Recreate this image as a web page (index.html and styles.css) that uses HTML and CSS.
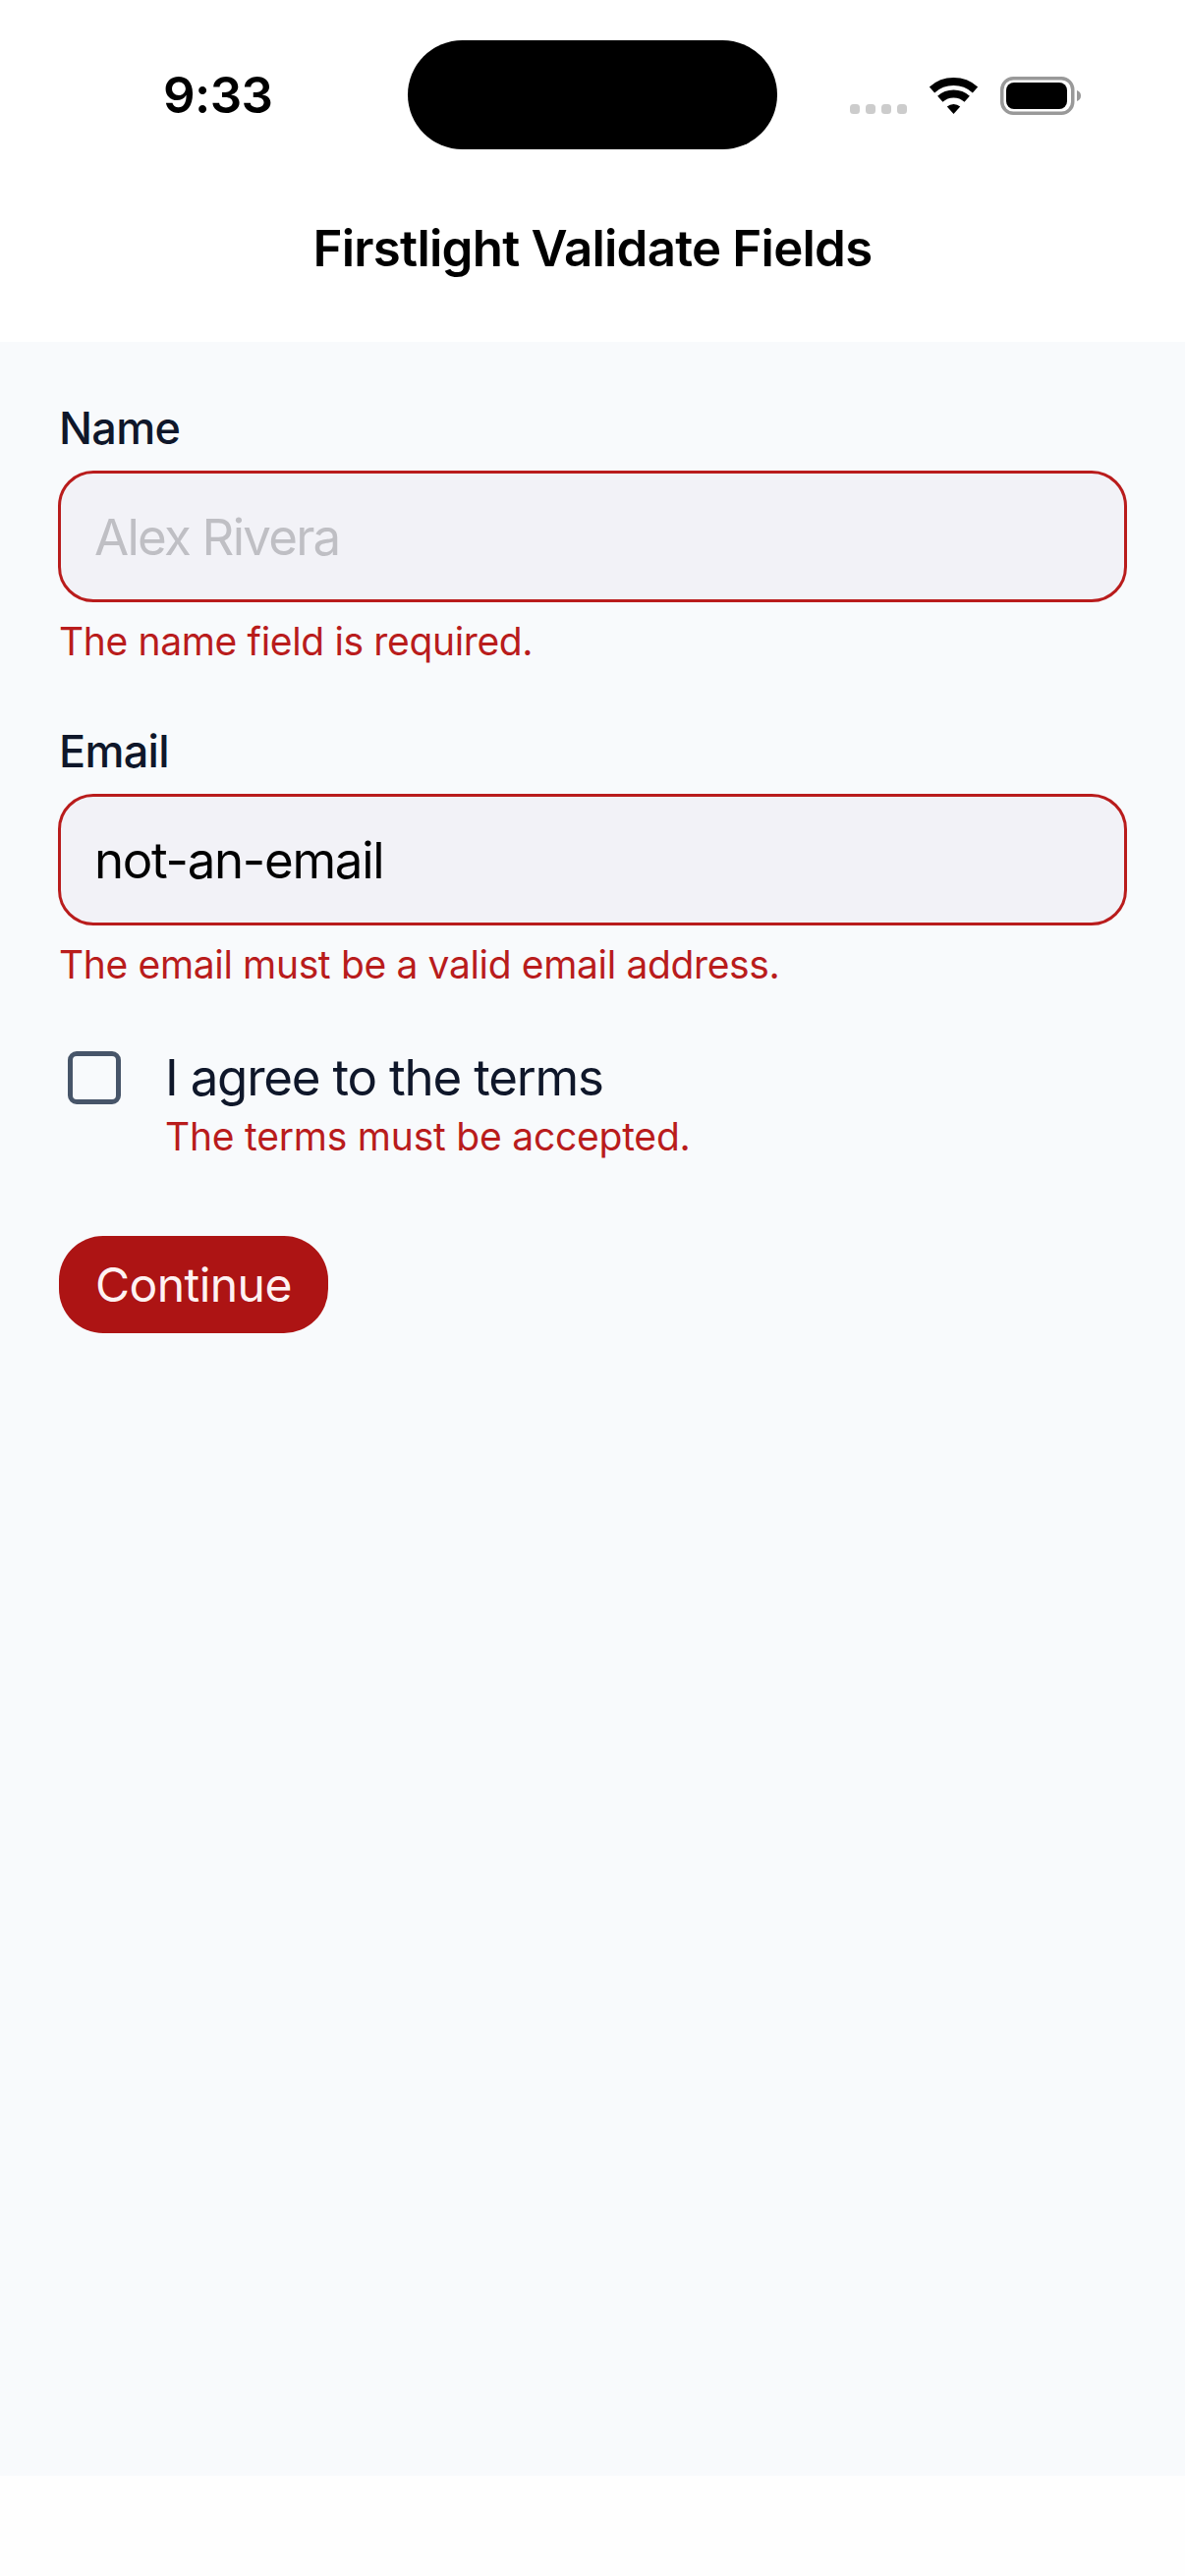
FILE: index.html
```html
<!DOCTYPE html>
<html>
    <head>
        <meta charset="utf-8">
        <title>Firstlight Validate Fields</title>
        <link rel="stylesheet" href="styles.css">
    </head>
    <body>
        <header class="top">
            <div class="status">
                <div class="status-time">9:33</div>
                <div class="island"></div>
                <svg class="status-icons" width="235" height="39" viewBox="0 0 235 39">
                    <g fill="#cccccc">
                        <rect x="0" y="28" width="10" height="10" rx="3.5"/>
                        <rect x="16" y="28" width="10" height="10" rx="3.5"/>
                        <rect x="32" y="28" width="10" height="10" rx="3.5"/>
                        <rect x="48" y="28" width="10" height="10" rx="3.5"/>
                    </g>
                    <g transform="translate(81 1)">
                        <path d="M2.5 12.5A33 33 0 0 1 46.5 12.5" fill="none" stroke="#000" stroke-width="8"/>
                        <path d="M10.8 21.8A20.5 20.5 0 0 1 38.2 21.8" fill="none" stroke="#000" stroke-width="8"/>
                        <path d="M24.5 37L17.8 29.6A10 10 0 0 1 31.2 29.6Z" fill="#000"/>
                    </g>
                    <rect x="154.75" y="1.75" width="72" height="35.5" rx="11.5" fill="none" stroke="#999999" stroke-width="3.5"/>
                    <rect x="159" y="6" width="62" height="27" rx="8" fill="#000"/>
                    <path d="M231 14C234 15 235 17 235 19.5C235 22 234 24 231 25Z" fill="#999999"/>
                </svg>
            </div>
            <h1 class="title">Firstlight Validate Fields</h1>
        </header>

        <main class="form">
            <div class="field">
                <label class="field-label" for="name">Name</label>
                <input class="field-input" id="name" type="text" placeholder="Alex Rivera">
                <p class="error">The name field is required.</p>
            </div>

            <div class="field">
                <label class="field-label" for="email">Email</label>
                <input class="field-input" id="email" type="text" value="not-an-email">
                <p class="error">The email must be a valid email address.</p>
            </div>

            <div class="terms">
                <input class="terms-box" id="terms" type="checkbox">
                <div class="terms-text">
                    <label class="terms-label" for="terms">I agree to the terms</label>
                    <p class="error error-terms">The terms must be accepted.</p>
                </div>
            </div>

            <button class="submit" type="button">Continue</button>
        </main>

        <footer class="bottom"></footer>
    </body>
</html>
```

FILE: styles.css
```css
html, body {
    height: 100%;
}

body, h1, p {
    margin: 0;
    padding: 0;
}

body {
    display: flex;
    flex-direction: column;
    width: 1206px;
    height: 2622px;
    overflow: hidden;
    background: #ffffff;
    font-family: Inter, "Liberation Sans", sans-serif;
}

.top {
    height: 348px;
    flex: none;
    background: #ffffff;
}

.status {
    display: flex;
    align-items: center;
    height: 111px;
    padding-top: 41px;
}

.status-time {
    width: 249px;
    padding-left: 166px;
    font-size: 51px;
    font-weight: 600;
    letter-spacing: -0.6px;
    color: #000000;
}

.island {
    width: 376px;
    height: 111px;
    border-radius: 56px;
    background: #000000;
}

.status-icons {
    margin-left: 74px;
    margin-top: 1px;
}

.title {
    padding-top: 65px;
    line-height: 72px;
    font-size: 51px;
    font-weight: 600;
    letter-spacing: -0.77px;
    text-align: center;
    color: #000000;
}

.form {
    flex: 1;
    display: flex;
    flex-direction: column;
    align-items: flex-start;
    padding: 58px 60px 0;
    background: #f8fafc;
}

.field {
    width: 100%;
    margin-bottom: 55px;
}

.field-label {
    display: block;
    margin-bottom: 13px;
    line-height: 60px;
    font-size: 45px;
    font-weight: 500;
    letter-spacing: -0.7px;
    color: #0f172a;
}

.field-input {
    display: block;
    box-sizing: border-box;
    width: calc(100% + 2px);
    height: 134px;
    margin-left: -1px;
    padding: 0 34px;
    border: 3px solid #b91c1c;
    border-radius: 36px;
    outline: none;
    background: #f2f2f7;
    font-family: Inter, "Liberation Sans", sans-serif;
    font-size: 51px;
    letter-spacing: -1.3px;
    color: #000000;
}

.field-input::placeholder {
    letter-spacing: -1.75px;
    color: #bfbfc4;
    opacity: 1;
}

.error {
    margin-top: 13px;
    line-height: 54px;
    font-size: 39px;
    letter-spacing: -0.35px;
    color: #b91c1c;
}

.terms {
    display: flex;
    align-items: flex-start;
    gap: 45px;
    padding-left: 9px;
}

.terms-box {
    appearance: none;
    box-sizing: border-box;
    width: 54px;
    height: 54px;
    margin: 6px 0 0;
    border: 5px solid #475569;
    border-radius: 9px;
    background: transparent;
}

.terms-label {
    display: block;
    line-height: 66px;
    font-size: 51px;
    letter-spacing: -1.2px;
    color: #0f172a;
}

.error-terms {
    margin-top: 0;
    letter-spacing: -0.22px;
}

.submit {
    height: 99px;
    margin-top: 74px;
    padding: 0 37px;
    border: 0;
    border-radius: 45px;
    background: #ad1414;
    font-family: Inter, "Liberation Sans", sans-serif;
    font-size: 48px;
    letter-spacing: -0.55px;
    color: #fef2f2;
}

.bottom {
    height: 102px;
    flex: none;
    background: #fefefe;
}
```
